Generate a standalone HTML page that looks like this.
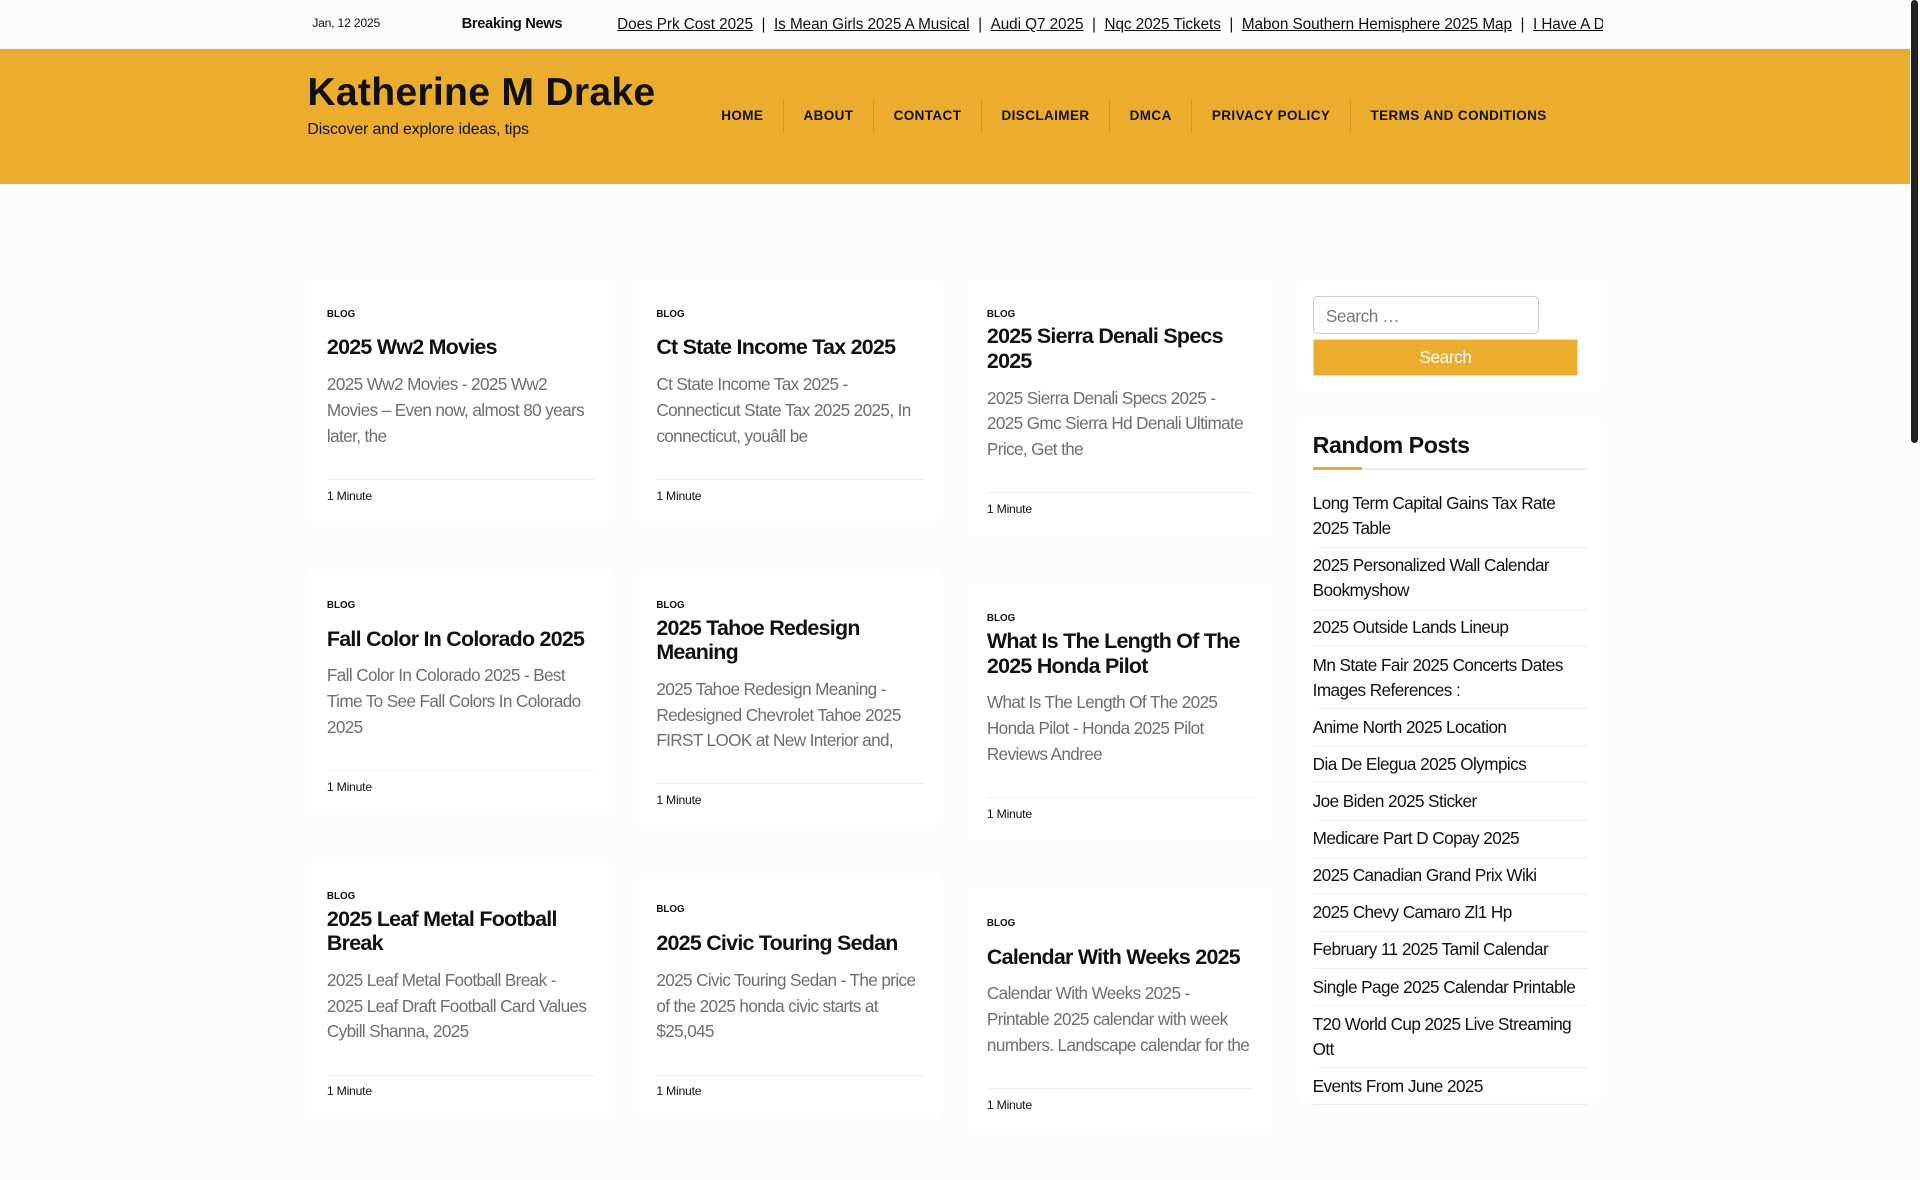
<!DOCTYPE html>
<html><head><meta charset="utf-8"><style>
html{zoom:1.22449}
*{box-sizing:border-box;margin:0;padding:0}
body{width:1568px;height:882px;overflow:hidden;background:#fcfcfc;font-family:"Liberation Sans",sans-serif;color:#111;position:relative}
.top{position:absolute;left:0;top:0;width:1560px;height:40px;background:#fcfcfc}
.date{position:absolute;left:255px;top:13px;font-size:10px;letter-spacing:-.2px}
.bn{position:absolute;left:377px;top:13px;font-size:12px;font-weight:bold;letter-spacing:-.3px}
.tick{position:absolute;left:504px;top:13px;width:805px;overflow:hidden;white-space:nowrap;font-size:12.5px;letter-spacing:-.05px}
.tick a{color:#111;text-decoration:underline}
.tick span{margin:0 7px}
.hdr{position:absolute;left:0;top:40px;width:1560px;height:110px;background:#ecad2e}
.t1{position:absolute;left:251px;top:18px;font-size:32px;font-weight:bold;letter-spacing:.2px}
.t2{position:absolute;left:251px;top:59px;font-size:13px;letter-spacing:-.1px}
.nav{position:absolute;left:573px;top:41px;display:flex;height:28px;align-items:center}
.nav div{font-size:11px;font-weight:bold;letter-spacing:.35px;padding:0 16px;border-left:1px solid rgba(0,0,0,.12);line-height:28px}
.nav div:first-child{border-left:none}
.col{position:absolute;top:228px;width:250px}
.card{background:#fff;border-radius:6px;padding:24px 16px 17px;margin-bottom:39px}
.cat{font-size:8px;font-weight:bold;line-height:10px;margin-bottom:12px}
.ct{font-size:17.5px;font-weight:bold;line-height:20px;margin-bottom:10px;letter-spacing:-.6px}
.ct.two{margin-top:-9px}
.ex{font-size:14px;line-height:21px;color:#6b6f75;padding-bottom:24px;border-bottom:1px solid #eceeef;letter-spacing:-.5px}
.min{font-size:10px;line-height:10px;margin-top:8px;letter-spacing:-.2px}
.side{position:absolute;left:1059px;width:250px;background:#fff;border-radius:6px}
.inp{position:absolute;left:13px;top:14px;width:185px;height:31px;border:1px solid #ccd;border-radius:4px;font-size:14px;color:#777;padding:7px 10px;letter-spacing:-.3px}
.btn{position:absolute;left:13px;top:49px;width:217px;height:30px;background:#ecad2e;border:1px solid #ddd;color:#fff;font-size:14px;text-align:center;line-height:28px;letter-spacing:-.3px}
.rp{font-size:19px;font-weight:bold;position:absolute;left:13px;top:13px;letter-spacing:-.4px}
.ul{position:absolute;left:13px;top:42px;width:224px;height:2px;background:#eee}
.ul i{display:block;width:40px;height:3px;margin-top:-1px;background:#ecad2e}
.list{position:absolute;left:13px;top:61px;width:224px}
.list div{font-size:14px;line-height:20.5px;border-bottom:1px solid #eceeef;padding:0 0 4.5px;letter-spacing:-.45px}
.list div+div{padding-top:4.5px}
.sb{position:absolute;left:1561px;top:0;width:5px;height:362px;background:#222;border-radius:3px}
</style></head><body>
<div class="top"><div class="date">Jan, 12 2025</div><div class="bn">Breaking News</div>
<div class="tick"><a>Does Prk Cost 2025</a><span>|</span><a>Is Mean Girls 2025 A Musical</a><span>|</span><a>Audi Q7 2025</a><span>|</span><a>Nqc 2025 Tickets</a><span>|</span><a>Mabon Southern Hemisphere 2025 Map</a><span>|</span><a>I Have A Dream 2025</a></div></div>
<div class="hdr"><div class="t1">Katherine M Drake</div><div class="t2">Discover and explore ideas, tips</div>
<div class="nav"><div>HOME</div><div>ABOUT</div><div>CONTACT</div><div>DISCLAIMER</div><div>DMCA</div><div>PRIVACY POLICY</div><div>TERMS AND CONDITIONS</div></div></div>

<div class="col" style="left:251px">
<div class="card"><div class="cat">BLOG</div><div class="ct">2025 Ww2 Movies</div><div class="ex">2025 Ww2 Movies - 2025 Ww2 Movies – Even now, almost 80 years later, the</div><div class="min">1 Minute</div></div>
<div class="card"><div class="cat">BLOG</div><div class="ct">Fall Color In Colorado 2025</div><div class="ex">Fall Color In Colorado 2025 - Best Time To See Fall Colors In Colorado 2025</div><div class="min">1 Minute</div></div>
<div class="card"><div class="cat">BLOG</div><div class="ct two">2025 Leaf Metal Football Break</div><div class="ex">2025 Leaf Metal Football Break - 2025 Leaf Draft Football Card Values Cybill Shanna, 2025</div><div class="min">1 Minute</div></div>
</div>
<div class="col" style="left:520px">
<div class="card"><div class="cat">BLOG</div><div class="ct">Ct State Income Tax 2025</div><div class="ex">Ct State Income Tax 2025 - Connecticut State Tax 2025 2025, In connecticut, youâll be</div><div class="min">1 Minute</div></div>
<div class="card"><div class="cat">BLOG</div><div class="ct two">2025 Tahoe Redesign Meaning</div><div class="ex">2025 Tahoe Redesign Meaning - Redesigned Chevrolet Tahoe 2025 FIRST LOOK at New Interior and,</div><div class="min">1 Minute</div></div>
<div class="card"><div class="cat">BLOG</div><div class="ct">2025 Civic Touring Sedan</div><div class="ex">2025 Civic Touring Sedan - The price of the 2025 honda civic starts at $25,045</div><div class="min">1 Minute</div></div>
</div>
<div class="col" style="left:790px">
<div class="card"><div class="cat">BLOG</div><div class="ct two">2025 Sierra Denali Specs 2025</div><div class="ex">2025 Sierra Denali Specs 2025 - 2025 Gmc Sierra Hd Denali Ultimate Price, Get the</div><div class="min">1 Minute</div></div>
<div class="card"><div class="cat">BLOG</div><div class="ct two">What Is The Length Of The 2025 Honda Pilot</div><div class="ex">What Is The Length Of The 2025 Honda Pilot - Honda 2025 Pilot Reviews Andree</div><div class="min">1 Minute</div></div>
<div class="card"><div class="cat">BLOG</div><div class="ct">Calendar With Weeks 2025</div><div class="ex">Calendar With Weeks 2025 - Printable 2025 calendar with week numbers. Landscape calendar for the</div><div class="min">1 Minute</div></div>
</div>

<div class="side" style="top:228px;height:92px"><div class="inp">Search …</div><div class="btn">Search</div></div>
<div class="side" style="top:340px;height:560px"><div class="rp">Random Posts</div><div class="ul"><i></i></div>
<div class="list">
<div>Long Term Capital Gains Tax Rate 2025 Table</div>
<div>2025 Personalized Wall Calendar Bookmyshow</div>
<div>2025 Outside Lands Lineup</div>
<div>Mn State Fair 2025 Concerts Dates Images References :</div>
<div>Anime North 2025 Location</div>
<div>Dia De Elegua 2025 Olympics</div>
<div>Joe Biden 2025 Sticker</div>
<div>Medicare Part D Copay 2025</div>
<div>2025 Canadian Grand Prix Wiki</div>
<div>2025 Chevy Camaro Zl1 Hp</div>
<div>February 11 2025 Tamil Calendar</div>
<div>Single Page 2025 Calendar Printable</div>
<div>T20 World Cup 2025 Live Streaming Ott</div>
<div>Events From June 2025</div>
</div></div>
<div class="sb"></div>
</body></html>
